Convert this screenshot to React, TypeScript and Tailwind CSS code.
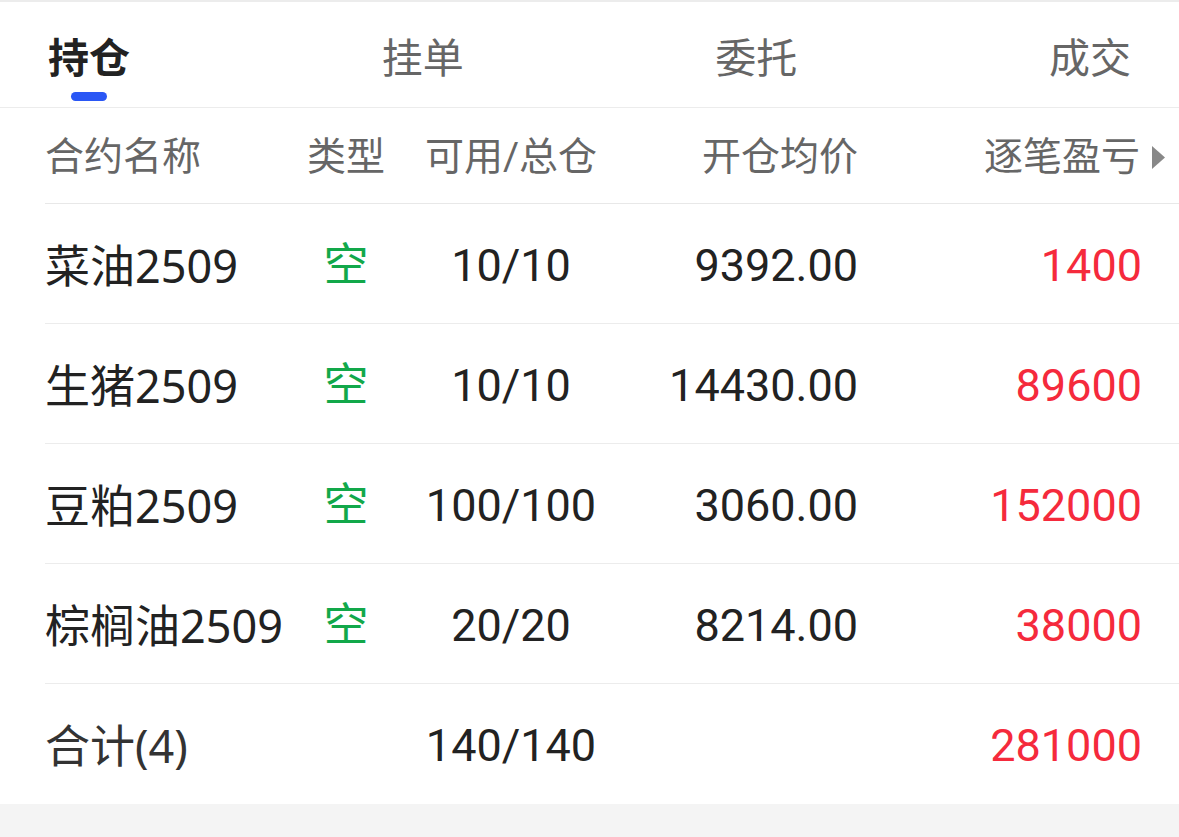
import React from "react";

const rows = [
  { name: "菜油2509", type: "空", avail: "10/10", price: "9392.00", pnl: "1400" },
  { name: "生猪2509", type: "空", avail: "10/10", price: "14430.00", pnl: "89600" },
  { name: "豆粕2509", type: "空", avail: "100/100", price: "3060.00", pnl: "152000" },
  { name: "棕榈油2509", type: "空", avail: "20/20", price: "8214.00", pnl: "38000" },
];

const cjk = "font-['Roboto','Noto_Sans_CJK_SC',sans-serif]";
const name = "font-['Noto_Sans','Noto_Sans_CJK_SC',sans-serif]";
const num = "font-['Roboto',sans-serif]";

export default function App() {
  const tabs = ["持仓", "挂单", "委托", "成交"];
  return (
    <div className={`w-[1179px] h-[837px] bg-[#f4f4f4] ${cjk}`}>
      <div className="h-[2px] bg-[#ececec]" />
      <div className="bg-white">
        <div className="h-[106px] flex justify-between px-[48px] border-b border-[#ececec]">
          {tabs.map((t, i) => (
            <div key={t} className="flex flex-col items-center pt-[32px]">
              <div
                className={`text-[41px] leading-[50px] ${
                  i === 0 ? "text-[#222] font-bold" : "text-[#666]"
                }`}
              >
                {t}
              </div>
              {i === 0 && <div className="mt-[8px] w-[36px] h-[9px] rounded-full bg-[#2a57f5]" />}
            </div>
          ))}
        </div>
        <div className="ml-[45px]">
          <div className="grid grid-cols-[245px_112px_218px_238px_1fr] h-[96px] pt-[4px] items-center border-b border-[#e8e8e8] text-[39px] text-[#666]">
            <div>合约名称</div>
            <div className="text-center">类型</div>
            <div className="text-center">可用/总仓</div>
            <div className="text-right">开仓均价</div>
            <div className="flex items-center justify-end pr-[14px]">
              <span>逐笔盈亏</span>
              <svg width="13" height="23" viewBox="0 0 13 23" className="ml-[12px]">
                <path d="M0 0 L13 11.5 L0 23 Z" fill="#888" />
              </svg>
            </div>
          </div>
          {rows.map((r) => (
            <div
              key={r.name}
              className="grid grid-cols-[245px_112px_218px_238px_1fr] h-[120px] pt-[4px] items-center border-b border-[#ececec] text-[45px]"
            >
              <div className={`text-[#222] whitespace-nowrap ${name}`}>{r.name}</div>
              <div className="text-center text-[#12a84a]">{r.type}</div>
              <div className={`text-center text-[#222] ${num}`}>{r.avail}</div>
              <div className={`text-right text-[#222] ${num}`}>{r.price}</div>
              <div className={`text-right pr-[37px] text-[#f52a3c] ${num}`}>{r.pnl}</div>
            </div>
          ))}
          <div className="grid grid-cols-[245px_112px_218px_238px_1fr] h-[120px] pt-[4px] items-center text-[45px]">
            <div className={`text-[#333] ${name}`}>合计(4)</div>
            <div />
            <div className={`text-center text-[#222] ${num}`}>140/140</div>
            <div />
            <div className={`text-right pr-[37px] text-[#f52a3c] ${num}`}>281000</div>
          </div>
        </div>
      </div>
    </div>
  );
}
